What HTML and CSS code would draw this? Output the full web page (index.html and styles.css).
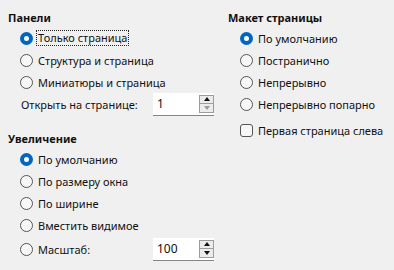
FILE: index.html
```html
<!DOCTYPE html>
<html lang="ru">
<head>
  <meta charset="UTF-8" />
  <title>Вид</title>
  <link rel="stylesheet" href="styles.css">
</head>
<body>
  <div class="dialog">

    <div class="col">
      <!-- Панели -->
      <div class="group">
        <div class="group-title">Панели</div>
        <label class="opt"><span class="radio checked"></span><span class="focus">Только страница</span></label>
        <label class="opt"><span class="radio"></span><span>Структура и страница</span></label>
        <label class="opt"><span class="radio"></span><span>Миниатюры и страница</span></label>
        <div class="field-row">
          <span class="field-label">Открыть на странице:</span>
          <div class="spin">
            <span class="spin-value">1</span>
            <div class="spin-buttons">
              <span class="spin-btn"><span class="arrow up"></span></span>
              <span class="spin-btn disabled"><span class="arrow down"></span></span>
            </div>
          </div>
        </div>
      </div>

      <!-- Увеличение -->
      <div class="group zoom">
        <div class="group-title">Увеличение</div>
        <label class="opt"><span class="radio checked"></span><span>По умолчанию</span></label>
        <label class="opt"><span class="radio"></span><span>По размеру окна</span></label>
        <label class="opt"><span class="radio"></span><span>По ширине</span></label>
        <label class="opt"><span class="radio"></span><span>Вместить видимое</span></label>
        <div class="opt scale-row">
          <span class="radio"></span><span class="scale-label">Масштаб:</span>
          <div class="spin">
            <span class="spin-value">100</span>
            <div class="spin-buttons">
              <span class="spin-btn"><span class="arrow up"></span></span>
              <span class="spin-btn"><span class="arrow down"></span></span>
            </div>
          </div>
        </div>
      </div>
    </div>

    <div class="col">
      <!-- Макет страницы -->
      <div class="group">
        <div class="group-title">Макет страницы</div>
        <label class="opt"><span class="radio checked"></span><span>По умолчанию</span></label>
        <label class="opt"><span class="radio"></span><span>Постранично</span></label>
        <label class="opt"><span class="radio"></span><span>Непрерывно</span></label>
        <label class="opt"><span class="radio"></span><span>Непрерывно попарно</span></label>
        <label class="opt check-row"><span class="checkbox"></span><span>Первая страница слева</span></label>
      </div>
    </div>

  </div>
</body>
</html>
```

FILE: styles.css
```css
body {
  margin: 0;
  background-color: #f0f0f0;
  font-family: 'Noto Sans', 'Open Sans', sans-serif;
  font-size: 11px;
  color: #111;
}

.dialog {
  display: grid;
  grid-template-columns: 220px 1fr;
  padding: 8px 0 0 8px;
}

.group-title {
  font-weight: bold;
  height: 19px;
  line-height: 19px;
}

.opt {
  display: flex;
  align-items: center;
  height: 22px;
  padding-left: 12px;
  white-space: nowrap;
}

.radio {
  width: 11px;
  height: 11px;
  border: 1px solid #555;
  border-radius: 50%;
  background-color: #f7f7f7;
  margin-right: 5px;
  flex-shrink: 0;
  box-sizing: content-box;
}

.radio.checked {
  width: 5px;
  height: 5px;
  border: 4px solid #0067c0;
  background-color: #fff;
}

.focus {
  outline: 1px dotted #222;
  outline-offset: 0;
  padding: 0 1px;
  margin-left: -1px;
  line-height: 14px;
}

.field-row {
  display: flex;
  align-items: center;
  height: 24px;
  padding-left: 13px;
  margin-top: -1px;
}

.field-label {
  width: 132px;
}

.spin {
  display: flex;
  align-items: center;
  width: 61px;
  height: 23px;
  background-color: #fff;
  border-bottom: 1px solid #868686;
  box-sizing: border-box;
}

.spin-value {
  flex: 1;
  padding-left: 4px;
  font-size: 12px;
}

.spin-buttons {
  display: flex;
  flex-direction: column;
  width: 15px;
}

.spin-btn {
  display: flex;
  align-items: center;
  justify-content: center;
  height: 9px;
  background-color: #ececec;
  border: 1px solid #9c9c9c;
  box-sizing: border-box;
}

.spin-btn + .spin-btn {
  height: 10px;
  margin-top: -1px;
}

.arrow {
  width: 0;
  height: 0;
  border-left: 3px solid transparent;
  border-right: 3px solid transparent;
}

.arrow.up {
  border-bottom: 4px solid #111;
}

.arrow.down {
  border-top: 4px solid #111;
}

.spin-btn.disabled .arrow.down {
  border-top-color: #9a9a9a;
}

.zoom {
  margin-top: 13px;
}

.scale-row {
  height: 24px;
  margin-top: 1px;
}

.scale-label {
  width: 115px;
}

.check-row {
  margin-top: 4px;
  padding-left: 12px;
}

.checkbox {
  width: 11px;
  height: 11px;
  border: 1px solid #555;
  border-radius: 3px;
  background-color: #f7f7f7;
  margin-right: 5px;
  flex-shrink: 0;
}
```
